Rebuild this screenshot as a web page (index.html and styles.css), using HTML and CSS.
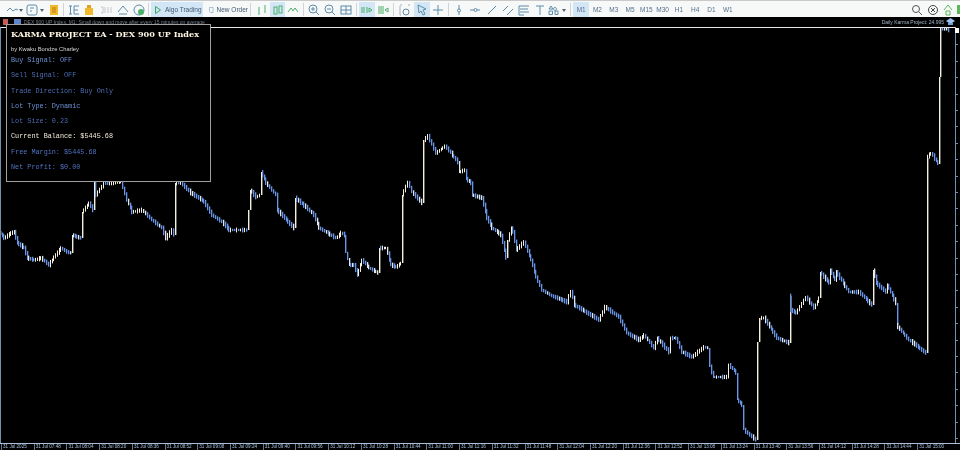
FILE: index.html
```html
<!DOCTYPE html>
<html lang="en">
<head>
<meta charset="utf-8">
<title>KARMA PROJECT EA</title>
<link rel="stylesheet" href="styles.css">
</head>
<body>
<div class="app">
  <header class="toolbar">
    <div class="tool w19"><svg width="19" height="12" viewBox="0 0 19 12"><path class="i" d="M1 7l3-3 3 3 3-2 2 1"/><path class="f" d="M13 5h4l-2 3z"/></svg></div>
    <div class="tool w22"><svg width="22" height="12" viewBox="0 0 22 12"><rect class="i" x="2" y="1" width="10" height="10" rx="2"/><path class="i" d="M5 4h4M5 7h2"/><path class="f" d="M15 5h4l-2 3z"/></svg></div>
    <div class="tool w14"><svg width="10" height="12" viewBox="0 0 10 12"><rect x="1" y="1" width="8" height="10" fill="#f2b82c"/><path d="M3 4h4M3 6h4M3 8h4" stroke="#b87c10" fill="none"/></svg></div>
    <span class="sep"></span>
    <div class="tool w15"><svg width="12" height="12" viewBox="0 0 12 12"><path class="i" d="M1 2h3M2.500 2v8M1 10h3M6 2h5M6 6h4M6 10h5M6 2v8"/></svg></div>
    <div class="tool w15"><svg width="12" height="12" viewBox="0 0 12 12"><rect x="2" y="4" width="8" height="7" fill="#f2b82c"/><rect x="4" y="1" width="4" height="3" fill="#e0a020"/></svg></div>
    <div class="tool w19"><svg width="12" height="12" viewBox="0 0 12 12"><path d="M1 3h2v6H1M5 3v6M8 3v6M11 3v6" stroke="#c4c8cc" fill="none"/></svg></div>
    <div class="tool w16"><svg width="12" height="12" viewBox="0 0 12 12"><path class="i" d="M1 8l5-6 5 6M2 10h8"/></svg></div>
    <div class="tool w15"><svg width="12" height="12" viewBox="0 0 12 12"><circle class="i" cx="6" cy="6" r="5"/><circle cx="8" cy="8" r="3" fill="#4caf6a"/></svg></div>
    <span class="sep"></span>
    <button class="btn on btn-algo"><svg width="8" height="10" viewBox="0 0 8 10"><path d="M1.500 1.500l5 3.500-5 3.500z" fill="none" stroke="#3aa56a"/></svg>Algo Trading</button>
    <button class="btn btn-order"><svg width="9" height="12" viewBox="0 0 9 12"><path class="i" d="M1 1h7v10H3L1 9z"/></svg>New Order</button>
    <span class="sep"></span>
    <div class="tool w17"><svg width="12" height="12" viewBox="0 0 12 12"><path d="M3 3v8M9 1v8" stroke="#4caf6a" fill="none"/></svg></div>
    <div class="tool w15 on"><svg width="12" height="12" viewBox="0 0 12 12"><rect x="2" y="3" width="3" height="7" fill="none" stroke="#4caf6a"/><rect x="7" y="2" width="3" height="7" fill="none" stroke="#4caf6a"/></svg></div>
    <div class="tool w16"><svg width="12" height="12" viewBox="0 0 12 12"><path d="M1 8l3-4 2 3 2-3 3 4" stroke="#4caf6a" fill="none"/></svg></div>
    <span class="sep"></span>
    <div class="tool w16"><svg width="12" height="12" viewBox="0 0 12 12"><circle class="i" cx="5" cy="5" r="4"/><path class="i" d="M8 8l3 3M3 5h4M5 3v4"/></svg></div>
    <div class="tool w16"><svg width="12" height="12" viewBox="0 0 12 12"><circle class="i" cx="5" cy="5" r="4"/><path class="i" d="M8 8l3 3M3 5h4"/></svg></div>
    <div class="tool w16"><svg width="12" height="12" viewBox="0 0 12 12"><rect class="i" x="1" y="2" width="10" height="8"/><path class="i" d="M1 6h10M6 2v8"/></svg></div>
    <span class="sep"></span>
    <div class="tool w16 on"><svg width="12" height="12" viewBox="0 0 12 12"><path d="M1 3v6M3 3v6M6 3v6M8 4l3 2-3 2z" stroke="#4caf6a" fill="none"/></svg></div>
    <div class="tool w16"><svg width="12" height="12" viewBox="0 0 12 12"><path d="M2 2v8M4 2v8M6 2v8M11 4L8 6l3 2z" stroke="#4caf6a" fill="none"/></svg></div>
    <span class="sep"></span>
    <div class="tool w18"><svg width="12" height="12" viewBox="0 0 12 12"><path d="M1 2v9h1M1 1h2M9 1h2" stroke="#a8b0b8" fill="none"/><circle class="i" cx="7" cy="8" r="3"/></svg></div>
    <div class="tool w16 on"><svg width="12" height="12" viewBox="0 0 12 12"><path class="i" d="M2 1l8 4-3 1 2 4-2 1-2-4-2 2z"/></svg></div>
    <div class="tool w16"><svg width="12" height="12" viewBox="0 0 12 12"><path class="i" d="M6 1v10M1 6h10"/></svg></div>
    <span class="sep"></span>
    <div class="tool w16"><svg width="12" height="12" viewBox="0 0 12 12"><path class="i" d="M6 1v4M6 8v3"/><circle class="i" cx="6" cy="6.500" r="1.500"/></svg></div>
    <div class="tool w16"><svg width="12" height="12" viewBox="0 0 12 12"><path class="i" d="M1 6h4M8 6h3"/><circle class="i" cx="6.500" cy="6" r="1.500"/></svg></div>
    <div class="tool w17"><svg width="12" height="12" viewBox="0 0 12 12"><path class="i" d="M2 10l8-8"/></svg></div>
    <div class="tool w16"><svg width="12" height="12" viewBox="0 0 12 12"><path class="i" d="M1 7l5-5M5 11l6-6"/></svg></div>
    <div class="tool w16"><svg width="12" height="12" viewBox="0 0 12 12"><path class="i" d="M1 2h10M2 5h8M2 8h9M1 11h5M1 2v9"/></svg></div>
    <div class="tool w16"><svg width="12" height="12" viewBox="0 0 12 12"><path class="i" d="M2 2h8M6 2v9"/></svg></div>
    <div class="tool w20"><svg width="20" height="12" viewBox="0 0 20 12"><path class="i" d="M1 5l2-3 2 3zM7 3.500a1.500 1.500 0 1 0 .01 0M1 7h3.500v3.500H1zM7 7h3v3.500H7z"/><path class="f" d="M14 5h4l-2 3z"/></svg></div>
    <span class="sep"></span>
    <div class="tf on">M1</div><div class="tf">M2</div><div class="tf">M3</div><div class="tf">M5</div><div class="tf">M15</div><div class="tf">M30</div><div class="tf">H1</div><div class="tf">H4</div><div class="tf">D1</div><div class="tf">W1</div>
    <div class="spacer"></div>
    <div class="tool w16"><svg width="12" height="12" viewBox="0 0 12 12"><circle cx="5" cy="5" r="3.500" fill="none" stroke="#555"/><path d="M8 8l3 3" stroke="#555"/></svg></div>
    <div class="tool w16"><svg width="12" height="12" viewBox="0 0 12 12"><circle cx="6" cy="6" r="4.500" fill="none" stroke="#444"/><path d="M4 4l4 4M8 4l-4 4" stroke="#444"/></svg></div>
    <div class="tool w14"><svg width="12" height="12" viewBox="0 0 12 12"><path d="M2 6l4-5 4 5M4 11h4V7H4z" fill="none" stroke="#5cb85c"/></svg></div>
    <div class="tool w5"><span class="stub"></span></div>
  </header>

  <main class="chart">
    <div class="chart-head">
      <div class="flags"><span class="flag red"></span><span class="flag blue"></span></div>
      <span class="chart-title">DEX 900 UP Index, M1: Small down and move after every 15 minutes on average</span>
      <span class="spacer"></span>
      <span class="karma">Daily Karma Project: 24.995</span>
      <svg class="hat" width="9" height="8" viewBox="0 0 9 8"><path d="M0 3l4.500-3L9 3 4.500 6z" fill="#9cc4ec"/><path d="M2 5v2h5V5" fill="#6f9fd0"/></svg>
    </div>
    <div class="plot">
      <svg id="bars" class="bars" viewBox="1 28 954 415" preserveAspectRatio="none"></svg>
      <span class="price-tag"></span>
    </div>
    <div class="time-axis">
      <span>31 Jul 2025</span><span>31 Jul 07:48</span><span>31 Jul 08:04</span><span>31 Jul 08:20</span><span>31 Jul 08:36</span><span>31 Jul 08:52</span><span>31 Jul 09:08</span><span>31 Jul 09:24</span><span>31 Jul 09:40</span><span>31 Jul 09:56</span><span>31 Jul 10:12</span><span>31 Jul 10:28</span><span>31 Jul 10:44</span><span>31 Jul 11:00</span><span>31 Jul 11:16</span><span>31 Jul 11:32</span><span>31 Jul 11:48</span><span>31 Jul 12:04</span><span>31 Jul 12:20</span><span>31 Jul 12:36</span><span>31 Jul 12:52</span><span>31 Jul 13:08</span><span>31 Jul 13:24</span><span>31 Jul 13:40</span><span>31 Jul 13:56</span><span>31 Jul 14:12</span><span>31 Jul 14:28</span><span>31 Jul 14:44</span><span>31 Jul 15:00</span>
    </div>

    <section class="panel">
      <h1 class="panel-title">KARMA PROJECT EA - DEX 900 UP Index</h1>
      <p class="panel-by">by Kwaku Bondze Charley</p>
      <ul class="stats">
        <li class="c1">Buy Signal: OFF</li>
        <li class="c2">Sell Signal: OFF</li>
        <li class="c2">Trade Direction: Buy Only</li>
        <li class="c1">Lot Type: Dynamic</li>
        <li class="c2">Lot Size: 0.23</li>
        <li class="c3">Current Balance: $5445.68</li>
        <li class="c4">Free Margin: $5445.68</li>
        <li class="c4">Net Profit: $0.00</li>
      </ul>
    </section>
  </main>
</div>
<script src="chart.js"></script>
</body>
</html>
```
FILE: styles.css
```css
* { box-sizing: border-box; }
html, body { margin: 0; padding: 0; background: #000; }
.app { width: 960px; height: 450px; display: flex; flex-direction: column; overflow: hidden; font-family: "Liberation Sans", sans-serif; filter: blur(.3px); }

.toolbar { height: 17px; flex: none; display: flex; align-items: center; padding: 1px 0 0 6px; background: #f7f8f8; border-top: 1px solid #c9c9c9; }
.tool { height: 15px; display: flex; align-items: center; justify-content: center; flex: none; }
.tool svg { display: block; }
.w5 { width: 5px; justify-content: flex-end; }
.w14 { width: 14px; }
.w15 { width: 15px; }
.w16 { width: 16px; }
.w17 { width: 17px; }
.w18 { width: 18px; }
.w19 { width: 19px; }
.w20 { width: 20px; }
.w22 { width: 22px; }
.on { background: #d3e6f6; }
.sep { width: 1px; height: 13px; margin: 0 2px; background: #d0d4d8; flex: none; }
.i { fill: none; stroke: #5d8cab; stroke-width: 1; }
.f { fill: #55606a; }
.btn { height: 15px; border: 0; padding: 0 0 0 3px; display: flex; align-items: center; gap: 3px; font: 6.500px "Liberation Sans", sans-serif; color: #3f5870; background: transparent; white-space: nowrap; flex: none; }
.btn.on { background: #d3e6f6; }
.btn-algo { width: 52px; margin-right: 3px; }
.btn-order { width: 42px; }
.tf { width: 16.300px; height: 15px; display: flex; align-items: center; justify-content: center; font-size: 6.500px; color: #55708c; flex: none; }
.spacer { flex: 1; }
.stub { width: 3px; height: 9px; background: #5cb85c; }

.chart { position: relative; flex: 1; min-height: 0; display: flex; flex-direction: column; background: #000; }
.chart-head { height: 10px; flex: none; display: flex; align-items: center; padding: 0 5px 0 3px; }
.flags { display: flex; gap: 6px; margin-right: 3px; }
.flag { width: 5px; height: 6px; }
.flag.red { background: #c85a5a; }
.flag.blue { width: 7px; background: #5f86c8; }
.chart-title { font-size: 5px; color: #77808c; white-space: nowrap; }
.karma { font-size: 5px; color: #a4b8cc; white-space: nowrap; margin-right: 2px; }
.hat { display: block; }

.plot { position: relative; flex: 1; min-height: 0; border-top: 1px solid #e8e8e8; border-left: 1px solid #6f8fae; border-right: 1px solid #6f8fae; margin-right: 4px; }
.plot::after { content: ""; position: absolute; top: 0; bottom: 0; right: -3px; width: 2px; background: repeating-linear-gradient(to bottom, #6f8fae 0 1px, transparent 1px 16.400px); }
.bars { display: block; width: 100%; height: 100%; }
.price-tag { position: absolute; right: -4px; top: 0; width: 4px; height: 5px; background: #fff; z-index: 1; }

.time-axis { height: 7px; flex: none; display: grid; grid-auto-flow: column; grid-auto-columns: 32.730px; padding-left: 1px; border-top: 1px solid #a7bfd8; overflow: hidden; }
.time-axis span { font-size: 4.600px; line-height: 6px; color: #a8c2dc; white-space: nowrap; padding-left: 1px; border-left: 1px solid #5c7894; }

.panel { position: absolute; left: 6px; top: 7px; width: 205px; height: 158px; background: #000; border: 1px solid #a0a0a0; padding: 3px 4px; }
.panel-title { margin: 0; font: bold 8.120px/12px "DejaVu Serif", serif; color: #fff6e4; white-space: nowrap; }
.panel-by { margin: 5px 0 0; font-size: 5.800px; line-height: 8px; color: #d8d8d8; white-space: nowrap; }
.stats { list-style: none; margin: 0; padding: 0; font: 6.800px/15.300px "Liberation Mono", monospace; }
.c1 { color: #6f93d8; }
.c2 { color: #4c6cb0; }
.c3 { color: #f0ead8; }
.c4 { color: #5273c0; }
```
FILE: chart.js
```js
var pts = [[0,232],[5,238],[12,233],[15,232],[18,243],[25,248],[28,258],[35,260],[42,258],[50,265],[55,257],[62,248],[68,252],[72,253],[73,235],[78,237],[82,238],[83,212],[90,203],[94,210],[95,182],[97,195],[105,183],[115,183],[122,182],[128,200],[133,212],[143,210],[153,220],[163,228],[167,238],[173,230],[175,235],[176,183],[182,183],[192,193],[200,198],[205,202],[213,215],[223,222],[230,230],[248,230],[251,190],[257,197],[261,195],[262,172],[267,183],[277,195],[278,210],[295,228],[296,198],[307,207],[315,215],[320,228],[337,238],[342,233],[345,235],[347,253],[350,265],[355,265],[358,275],[363,260],[370,268],[379,273],[380,248],[387,248],[392,265],[397,267],[402,263],[403,195],[409,182],[413,192],[423,203],[425,140],[429,136],[437,153],[446,146],[459,162],[460,172],[466,170],[467,179],[472,183],[473,195],[483,198],[488,218],[493,228],[502,235],[507,258],[509,240],[512,228],[514,232],[517,250],[525,242],[532,260],[537,277],[543,290],[553,296],[568,302],[572,291],[575,305],[592,315],[600,320],[606,307],[620,317],[628,333],[640,340],[645,335],[655,348],[658,338],[670,352],[672,338],[677,338],[683,352],[693,357],[705,347],[709,348],[711,367],[714,377],[728,377],[730,365],[737,373],[738,400],[743,405],[745,430],[757,440],[759,342],[761,318],[765,318],[778,338],[790,343],[790,296],[792,310],[797,313],[807,297],[815,308],[820,298],[821,272],[825,277],[830,283],[831,270],[836,280],[837,272],[850,292],[860,292],[873,305],[874,270],[877,283],[887,292],[888,285],[897,303],[897,325],[910,340],[927,353],[927,158],[932,153],[939,164],[940,77],[942,28],[950,30]];
var svg = document.getElementById('bars');
var NS = 'http://www.w3.org/2000/svg';
function bar(x, y0, y1, color, w) {
  var r = document.createElementNS(NS, 'rect');
  r.setAttribute('x', x);
  r.setAttribute('y', Math.min(y0, y1));
  r.setAttribute('width', w);
  r.setAttribute('height', Math.abs(y1 - y0));
  r.setAttribute('fill', color);
  svg.appendChild(r);
}
var seed = 7;
function jitter() {
  seed = (seed * 16807) % 2147483647;
  return seed / 2147483647;
}
for (var k = 0; k + 1 < pts.length; k++) {
  var a = pts[k], b = pts[k + 1];
  var n = Math.max(1, Math.round((b[0] - a[0]) / 2));
  var dx = (b[0] - a[0]) / n, dy = (b[1] - a[1]) / n;
  for (var i = 0; i < n; i++) {
    var x = Math.round(a[0] + i * dx);
    var ya = a[1] + i * dy, yb = ya + dy;
    var rising = dy < 0 || (dy === 0 && jitter() > .6);
    var big = Math.abs(dy) > 15;
    var j = big ? 0 : 1 + jitter() * 1.5;
    var color = rising ? '#f6f0df' : (jitter() > .8 ? '#dfe6f4' : '#6a94e6');
    var w = big ? 1.4 : (rising ? 1 : 1.3);
    bar(x, Math.min(ya, yb) - j, Math.max(ya, yb) + j, color, w);
  }
}
```
